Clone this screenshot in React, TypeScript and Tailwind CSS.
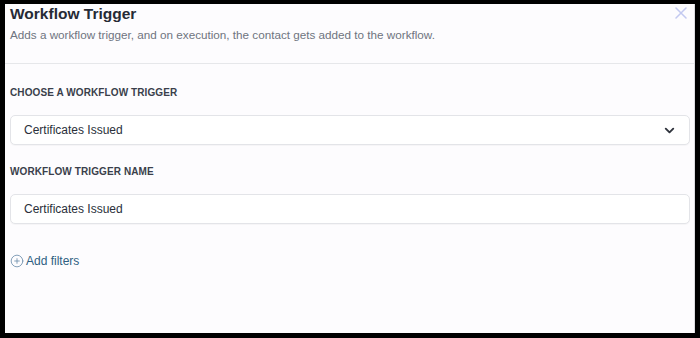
import { ChevronDown, CirclePlus } from "lucide-react";

export default function App() {
  return (
    <div className="h-[338px] w-[700px] bg-black pt-[4px] pb-[5px] pl-[5px] pr-[5px] font-['Liberation_Sans',Arial,sans-serif]">
      <div className="h-full w-[690px] bg-[#fdfcfe] border-r border-[#dcdce0]">
        {/* Header */}
        <div className="relative pl-[5px] pr-[4px] pb-[20px] border-b border-[#e6e7ea]">
          <h1 className="text-[15.5px] leading-[19px] font-bold text-[#262a35]">Workflow Trigger</h1>
          <p className="mt-[4px] text-[11.7px] leading-[16px] text-[#6f7480]">
            Adds a workflow trigger, and on execution, the contact gets added to the workflow.
          </p>
          <button className="absolute right-[7px] top-[3px] text-[#c3c9f0]">
            <svg width="12" height="12" viewBox="0 0 12 12" fill="none" stroke="currentColor" strokeWidth="1.5" strokeLinecap="round">
              <path d="M1 1l10 10M11 1L1 11" />
            </svg>
          </button>
        </div>

        {/* Body */}
        <div className="pl-[5px] pr-[4px] pt-[23px]">
          <label className="block text-[10px] leading-[12px] font-bold text-[#3a3f4b] tracking-[0.01em]">
            CHOOSE A WORKFLOW TRIGGER
          </label>
          <div className="mt-[16px] flex h-[30px] items-center justify-between rounded-[5px] border border-[#e3e4e8] bg-white pl-[13px] pr-[12px] shadow-[0_1px_1px_rgba(0,0,0,0.03)]">
            <span className="text-[12px] leading-[16px] text-[#2a2f3a]">Certificates Issued</span>
            <ChevronDown size={15} strokeWidth={3} className="text-[#30343d]" />
          </div>

          <label className="mt-[21px] block text-[10px] leading-[12px] font-bold text-[#3a3f4b] tracking-[0.01em]">
            WORKFLOW TRIGGER NAME
          </label>
          <div className="mt-[16px] flex h-[30px] items-center rounded-[5px] border border-[#e3e4e8] bg-white pl-[13px] shadow-[0_1px_1px_rgba(0,0,0,0.03)]">
            <span className="text-[12px] leading-[16px] text-[#2a2f3a]">Certificates Issued</span>
          </div>

          <button className="mt-[29px] flex items-center gap-[2px] text-[12px] leading-[16px] text-[#2f5f82]">
            <CirclePlus size={14} strokeWidth={1.4} className="text-[#6b8cab]" />
            <span>Add filters</span>
          </button>
        </div>
      </div>
    </div>
  );
}
